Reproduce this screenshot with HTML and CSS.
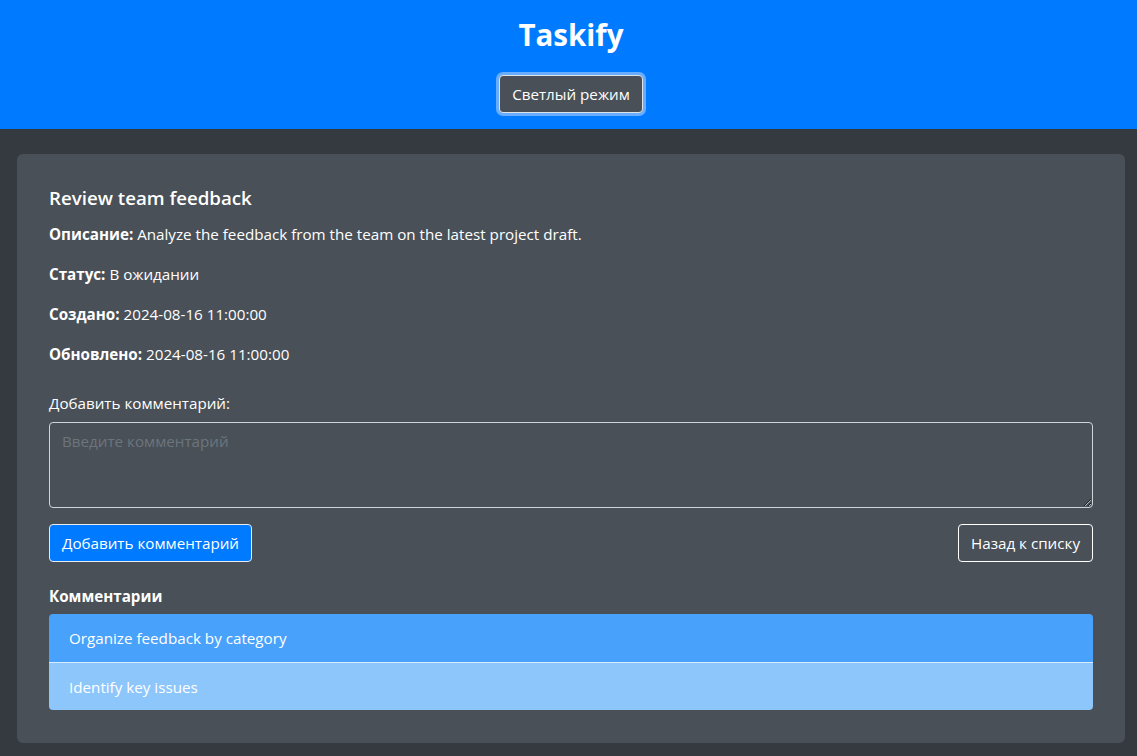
FILE: index.html
```html
<!DOCTYPE html>
<html lang="ru">
<head>
<meta charset="utf-8">
<title>Taskify</title>
<link rel="stylesheet" href="styles.css">
</head>
<body>
<header class="topbar">
  <h1 class="brand">Taskify</h1>
  <button class="mode-btn" type="button">Светлый режим</button>
</header>
<main class="page">
  <section class="card">
    <h5 class="card-title">Review team feedback</h5>
    <p class="field"><strong>Описание:</strong> Analyze the feedback from the team on the latest project draft.</p>
    <p class="field"><strong>Статус:</strong> В ожидании</p>
    <p class="field"><strong>Создано:</strong> 2024-08-16 11:00:00</p>
    <p class="field"><strong>Обновлено:</strong> 2024-08-16 11:00:00</p>
    <label class="label" for="c">Добавить комментарий:</label>
    <textarea id="c" class="comment-input" placeholder="Введите комментарий"></textarea>
    <div class="actions">
      <button class="btn btn-primary" type="button">Добавить комментарий</button>
      <button class="btn btn-outline" type="button">Назад к списку</button>
    </div>
    <h6 class="comments-title">Комментарии</h6>
    <ul class="list">
      <li class="item item-a">Organize feedback by category</li>
      <li class="item item-b">Identify key issues</li>
    </ul>
  </section>
</main>
</body>
</html>
```
FILE: styles.css
```css
* { box-sizing: border-box; }
html, body { margin: 0; }
body {
  background: #343a40;
  color: #fff;
  font-family: "Open Sans", "Noto Sans", sans-serif;
  font-size: 15.2px;
  line-height: 24px;
  min-height: 756px;
}
.topbar {
  background: #007bff;
  padding: 16px 0 16px 5px;
  display: flex;
  flex-direction: column;
  align-items: center;
}
.brand {
  margin: 0 0 21px;
  font-size: 29.5px;
  line-height: 38px;
  font-weight: 700;
}
.mode-btn {
  font: inherit;
  color: #fff;
  background: #495057;
  border: 1px solid #dfe3e6;
  border-radius: 4px;
  height: 38px;
  padding: 0 12px;
  box-shadow: 0 0 0 3px rgba(140, 190, 255, 0.75);
}
.page {
  padding: 25px 12px 0 17px;
}
.card {
  background: #495057;
  border-radius: 6px;
  padding: 32px 32px 33px;
}
.card-title {
  margin: 0 0 12px;
  font-size: 18.7px;
  line-height: 24px;
  font-weight: 600;
}
.field { margin: 0 0 16px; }
.field strong { font-weight: 700; }
.label {
  display: block;
  margin: 25px 0 7px;
}
.comment-input {
  display: block;
  width: 100%;
  height: 86px;
  background: transparent;
  border: 1px solid #ced4da;
  border-radius: 4px;
  padding: 6px 12px;
  color: #fff;
  font: inherit;
  resize: vertical;
}
.comment-input::placeholder { color: #6c757d; }
.actions {
  display: flex;
  justify-content: space-between;
  margin-top: 16px;
}
.btn {
  font: inherit;
  color: #fff;
  height: 38px;
  padding: 0 12px;
  border-radius: 4px;
  border: 1px solid #fff;
}
.btn-primary { background: #007bff; border-color: #e9ecef; }
.btn-outline { background: transparent; }
.comments-title {
  margin: 25px 0 8px;
  font-size: 15.2px;
  line-height: 19px;
  font-weight: 700;
}
.list {
  list-style: none;
  margin: 0;
  padding: 0;
  border-radius: 4px;
  overflow: hidden;
}
.item {
  padding: 12px 20px;
  line-height: 24px;
}
.item-a { background: #48a1fb; border-bottom: 1px solid #d9ebfe; height: 49px; }
.item-b { background: #8dc6fb; height: 47px; }
```
